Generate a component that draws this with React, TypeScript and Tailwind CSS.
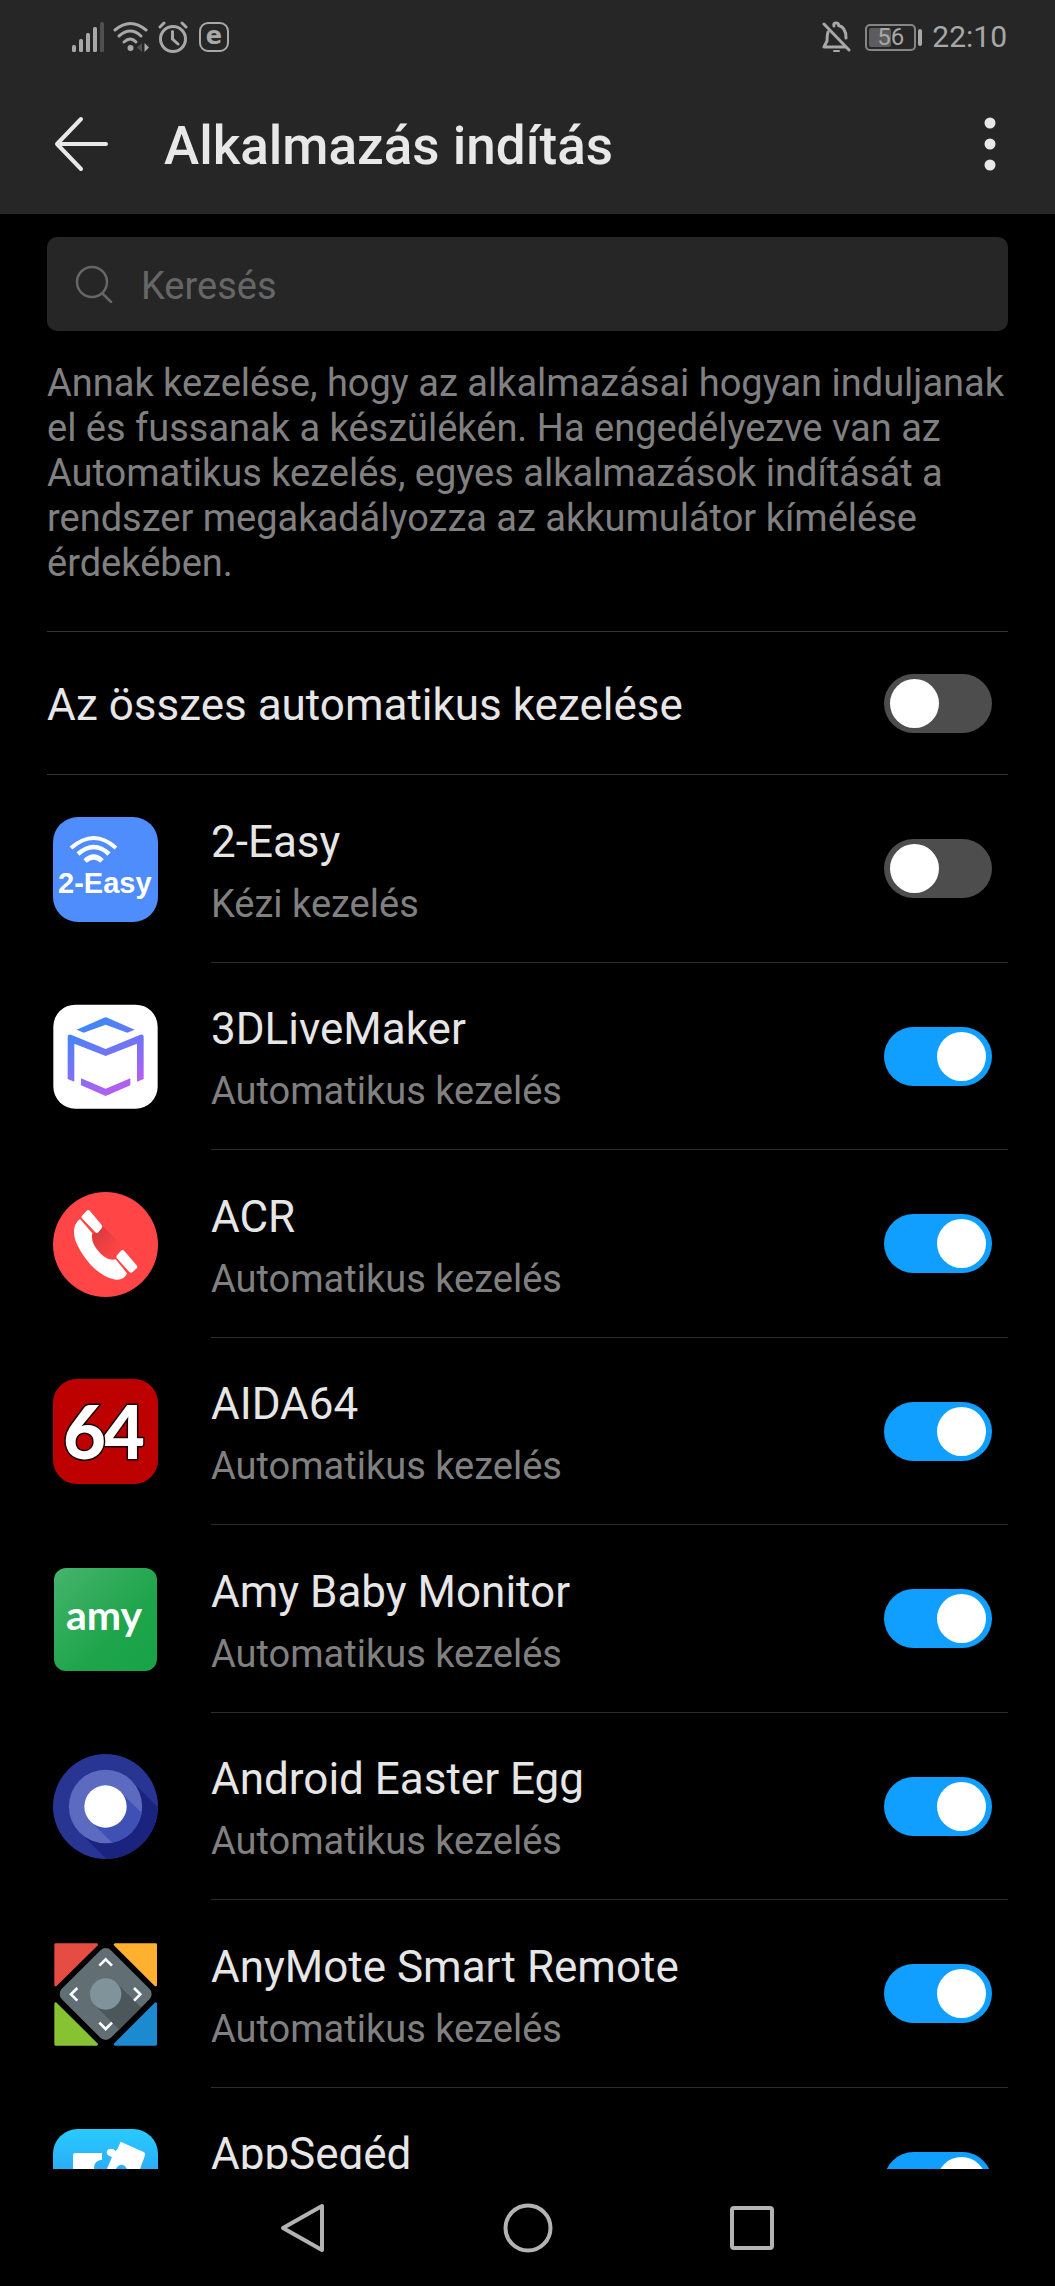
import { useId, useState } from 'react';
import type { ReactNode } from 'react';

type AppEntry = {
  name: string;
  enabled: boolean;
  icon: ReactNode;
};

const TwoEasyIcon = () => (
  <svg viewBox="0 0 105 105" className="size-full" aria-hidden="true">
    <rect width="105" height="105" rx="25" fill="#4f8dfd" />
    <g fill="none" stroke="#fff">
      <path d="M18 31 Q41 11 63 31" strokeWidth="4" />
      <path d="M25 37 Q41 23 56 37" strokeWidth="4.5" />
      <path d="M32 44 Q41 36 49 44" strokeWidth="5" />
    </g>
    <text x="5" y="76" fill="#fff" fontFamily="Liberation Sans, sans-serif" fontWeight="700" fontSize="29">
      2-Easy
    </text>
  </svg>
);

const LiveMakerIcon = () => (
  <svg viewBox="69 70 315 315" className="size-full" aria-hidden="true">
    <defs>
      <linearGradient id="maker" gradientUnits="userSpaceOnUse" x1="170" y1="120" x2="270" y2="340">
        <stop offset="0" stopColor="#3b89f7" />
        <stop offset="0.5" stopColor="#7672f8" />
        <stop offset="1" stopColor="#bb5cf0" />
      </linearGradient>
    </defs>
    <rect x="70" y="72" width="313" height="312" rx="66" fill="#fff" />
    <g fill="url(#maker)">
      <path d="M140 147 L222 111 Q227 109 232 111 L314 147 L292 156 L227 132 L161 156 Z" />
      <path d="M113 295 V168 Q114 160 123 162 L227 205 L331 162 Q341 160 341 168 V295 L321 303 V189 L227 226 L133 189 V303 Z" />
      <path d="M153 293 L227 324 L301 293 V314 L227 346 L153 314 Z" />
    </g>
  </svg>
);

const AcrIcon = () => (
  <svg viewBox="69 63 315 315" className="size-full" aria-hidden="true">
    <defs>
      <linearGradient id="acr-shade" gradientUnits="userSpaceOnUse" x1="195" y1="185" x2="260" y2="240">
        <stop offset="0" stopColor="#d93a3e" />
        <stop offset="1" stopColor="#ff4545" />
      </linearGradient>
    </defs>
    <circle cx="226.5" cy="220.5" r="157.5" fill="#ff4545" />
    <path d="M187 190 L219 166 L275 222 L258 264 C220 262 190 240 187 190 Z" fill="url(#acr-shade)" />
    <g fill="#fff">
      <path d="M150 144 C130 158 127 188 139 215 C164 272 215 324 262 326 C275 326 286 320 291 307 L257 265 C244 270 224 262 208 244 C190 224 182 206 187 187 Z" />
      <path d="M170 119 Q175 114 180 120 L215 162 Q219 167 215 172 L205 184 Q201 189 196 184 L156 142 Q152 138 156 134 Z" />
      <path d="M273 239 Q278 234 283 240 L320 283 Q324 288 320 292 L308 303 Q303 308 298 303 L262 263 Q257 258 261 253 Z" />
    </g>
  </svg>
);

const AidaIcon = () => (
  <svg viewBox="0 0 105 105" className="size-full" aria-hidden="true">
    <rect width="105" height="105" rx="24" fill="#bd0000" />
    <g
      fill="#fff"
      stroke="#1a0000"
      strokeWidth="3"
      paintOrder="stroke"
      fontFamily="Lato, sans-serif"
      fontWeight="900"
      fontSize="74"
    >
      <text x="49" y="80">4</text>
      <text x="10" y="80">6</text>
    </g>
  </svg>
);

const AmyIcon = () => (
  <svg viewBox="0 0 105 105" className="size-full" aria-hidden="true">
    <defs>
      <linearGradient id="amy" x1="0" y1="0" x2="1" y2="1">
        <stop offset="0" stopColor="#46b46c" />
        <stop offset="0.6" stopColor="#1fa54c" />
        <stop offset="1" stopColor="#17a345" />
      </linearGradient>
    </defs>
    <rect x="1" y="1" width="103" height="103" rx="12" fill="url(#amy)" />
    <text x="13" y="63" fill="#fff" fontFamily="Lato, sans-serif" fontWeight="700" fontSize="41">
      amy
    </text>
  </svg>
);

const EasterEggIcon = () => (
  <svg viewBox="69 71 315 315" className="size-full" aria-hidden="true">
    <defs>
      <clipPath id="egg-outer"><circle cx="226.5" cy="228.5" r="157.5" /></clipPath>
      <clipPath id="egg-inner"><circle cx="226.5" cy="228.5" r="110" /></clipPath>
    </defs>
    <circle cx="226.5" cy="228.5" r="157.5" fill="#283593" />
    <path d="M304 151 L404 251 V406 H249 L149 306 Z" fill="#1a237e" clipPath="url(#egg-outer)" />
    <circle cx="226.5" cy="228.5" r="110" fill="#5c6bc0" />
    <path d="M271 184 L400 313 L311 402 L182 273 Z" fill="#3f51b5" clipPath="url(#egg-inner)" />
    <circle cx="226.5" cy="228.5" r="63.5" fill="#fff" />
  </svg>
);

const AnyMoteIcon = () => (
  <svg viewBox="69 65 315 315" className="size-full" aria-hidden="true">
    <defs>
      <clipPath id="pad"><rect x="123" y="117" width="208" height="208" rx="22" transform="rotate(45 227 221)" /></clipPath>
    </defs>
    <g strokeWidth="8" strokeLinejoin="round">
      <path d="M77 73 H200 L77 194 Z" fill="#e54d42" stroke="#e54d42" />
      <path d="M255 73 H377 V194 Z" fill="#ffb02e" stroke="#ffb02e" />
      <path d="M77 250 V372 H200 Z" fill="#86c232" stroke="#86c232" />
      <path d="M377 250 V372 H255 Z" fill="#1b8ad0" stroke="#1b8ad0" />
    </g>
    <rect x="123" y="117" width="208" height="208" rx="22" fill="#616e74" transform="rotate(45 227 221)" />
    <path d="M260 188 L360 288 L294 354 L194 254 Z" fill="#4c575c" clipPath="url(#pad)" />
    <circle cx="227" cy="221" r="47" fill="#80939a" />
    <g fill="none" stroke="#fff" strokeWidth="8">
      <path d="M208 136 L227 117 L246 136" />
      <path d="M208 307 L227 326 L246 307" />
      <path d="M142 203 L123 222 L142 241" />
      <path d="M312 203 L331 222 L312 241" />
    </g>
  </svg>
);

const AppHelperIcon = () => (
  <svg viewBox="69 147 315 315" className="size-full" aria-hidden="true">
    <defs>
      <linearGradient id="helper" x1="0" y1="0" x2="0" y2="1">
        <stop offset="0" stopColor="#28cbff" />
        <stop offset="1" stopColor="#2f7ff0" />
      </linearGradient>
    </defs>
    <rect x="69" y="147" width="315" height="315" rx="74" fill="url(#helper)" />
    <g fill="#fff">
      <path d="M136 219 H216 V239 Q192 242 192 262 Q192 285 216 288 V400 H129 V226 Q129 219 136 219 Z" />
      <path d="M272 185 L341 216 Q347 220 345 226 L322 290 L293 272 Q287 254 273 254 Q259 256 255 278 L231 266 L246 231 Q231 228 230 217 Q232 206 242 206 Q253 206 256 213 L262 208 Z" />
    </g>
  </svg>
);

const initialApps: AppEntry[] = [
  { name: '2-Easy', enabled: false, icon: <TwoEasyIcon /> },
  { name: '3DLiveMaker', enabled: true, icon: <LiveMakerIcon /> },
  { name: 'ACR', enabled: true, icon: <AcrIcon /> },
  { name: 'AIDA64', enabled: true, icon: <AidaIcon /> },
  { name: 'Amy Baby Monitor', enabled: true, icon: <AmyIcon /> },
  { name: 'Android Easter Egg', enabled: true, icon: <EasterEggIcon /> },
  { name: 'AnyMote Smart Remote', enabled: true, icon: <AnyMoteIcon /> },
  { name: 'AppSegéd', enabled: true, icon: <AppHelperIcon /> },
];

const Toggle = ({ id, checked, onChange }: { id: string; checked: boolean; onChange: () => void }) => (
  <input
    id={id}
    type="checkbox"
    role="switch"
    checked={checked}
    onChange={onChange}
    className="h-[59px] w-[108px] shrink-0 cursor-pointer appearance-none rounded-full bg-[#4d4d4d] px-[6px] py-[5px] before:block before:size-[49px] before:rounded-full before:bg-white checked:bg-[#119fff] checked:before:ml-auto"
  />
);

const StatusBar = () => (
  <div className="flex h-[74px] items-center justify-between pr-12 pl-[72px] text-[#a8a8a8]">
    <div className="flex items-center gap-[9px]">
      <svg width="32" height="32" viewBox="0 0 32 32" fill="currentColor" aria-hidden="true">
        <rect x="0" y="24" width="4" height="7" rx="1.5" />
        <rect x="7" y="18" width="4" height="13" rx="1.5" />
        <rect x="14" y="12" width="4" height="19" rx="1.5" />
        <rect x="21" y="6" width="4" height="25" rx="1.5" />
        <rect x="28" y="1" width="4" height="30" rx="1.5" fill="#505050" />
      </svg>
      <svg width="36" height="32" viewBox="0 0 36 32" fill="none" stroke="currentColor" strokeWidth="3" strokeLinecap="round" aria-hidden="true">
        <path d="M2 9 Q17.5 -4 33 9" />
        <path d="M6 15 Q17.5 5 28 15" />
        <path d="M11 21 Q17.5 15 23 21" />
        <circle cx="17.5" cy="27" r="3" fill="currentColor" stroke="none" />
        <path d="M29 22 V31 L24 26.5 Z" fill="#505050" stroke="none" />
        <path d="M31.5 22 V31 L36 26.5 Z" fill="currentColor" stroke="none" />
      </svg>
      <svg width="30" height="32" viewBox="0 0 30 32" fill="none" stroke="currentColor" strokeWidth="3" strokeLinecap="round" aria-hidden="true">
        <circle cx="15" cy="18" r="12.5" />
        <path d="M2 6 L6 2 M24 2 L28 6" />
        <path d="M14.5 10.5 V18 L20 23" />
      </svg>
      <svg width="32" height="32" viewBox="0 0 32 32" aria-hidden="true">
        <rect x="3" y="2" width="28" height="28" rx="8" fill="none" stroke="currentColor" strokeWidth="2" />
        <text x="17" y="23" textAnchor="middle" fill="currentColor" fontFamily="DejaVu Sans, sans-serif" fontWeight="700" fontSize="24">e</text>
      </svg>
    </div>
    <div className="flex items-center">
      <svg width="30" height="32" viewBox="0 0 30 32" fill="none" stroke="currentColor" strokeWidth="3" strokeLinecap="round" strokeLinejoin="round" aria-hidden="true">
        <path d="M2 3 L27 29" />
        <path d="M12 5 Q11 2 14 2 Q17 2 16.5 4.5 Q24 6 24 17" />
        <path d="M6 11 Q5 14 5 20 L2 26 H23" />
        <path d="M12 30 H17" strokeWidth="2" />
      </svg>
      <div className="ml-[13px] flex items-center gap-[2px]">
        <div className="grid h-[27px] w-[51px] rounded-[5px] border-2 border-[#858585] p-[2px]">
          <div className="col-start-1 row-start-1 w-1/2 rounded-[2px] bg-[#5c5c5c]" />
          <span className="col-start-1 row-start-1 place-self-center text-[24px] leading-[19px]">56</span>
        </div>
        <div className="h-[17px] w-[4px] rounded-[2px] bg-[#a8a8a8]" />
      </div>
      <span className="ml-[10px] text-[30px] leading-[36px]">22:10</span>
    </div>
  </div>
);

const AppRow = ({ app, onToggle }: { app: AppEntry; onToggle: () => void }) => {
  const id = useId();

  return (
    <li className="flex shrink-0 items-center gap-[53px] pr-[47px] pl-[53px] odd:h-[188px] even:h-[187px]">
      <div className="size-[105px] shrink-0">{app.icon}</div>
      <div className="flex h-full flex-1 items-center justify-between border-b border-[#2b2b2b] pr-4">
        <label htmlFor={id} className="flex cursor-pointer flex-col gap-[10px] pt-1">
          <span className="text-[44px] leading-[56px] text-[#e6e6e6]">{app.name}</span>
          <span className="text-[38px] leading-[48px] text-[#808080]">
            {app.enabled ? 'Automatikus kezelés' : 'Kézi kezelés'}
          </span>
        </label>
        <Toggle id={id} checked={app.enabled} onChange={onToggle} />
      </div>
    </li>
  );
};

const App = () => {
  const [apps, setApps] = useState(initialApps);
  const [manageAll, setManageAll] = useState(false);

  const toggleApp = (name: string) => {
    setApps(prev => prev.map(a => (a.name === name ? { ...a, enabled: !a.enabled } : a)));
  };

  const toggleAll = () => {
    setApps(prev => prev.map(a => ({ ...a, enabled: !manageAll })));
    setManageAll(!manageAll);
  };

  return (
    <div className="flex h-screen flex-col overflow-hidden bg-black font-['Roboto',sans-serif]">
      <header className="shrink-0 bg-[#262626]">
        <StatusBar />
        <div className="flex h-[140px] items-center pr-[47px] pl-[53px] text-[#e8e8e8]">
          <button type="button" aria-label="Vissza" className="shrink-0">
            <svg width="57" height="57" viewBox="0 0 57 57" fill="none" stroke="currentColor" strokeWidth="4" strokeLinecap="round" strokeLinejoin="round">
              <path d="M28 3 L4 28 L28 53 M4 28 H53" />
            </svg>
          </button>
          <h1 className="ml-[54px] flex-1 pt-1 text-[53px] leading-[64px] font-medium">Alkalmazás indítás</h1>
          <button type="button" aria-label="További lehetőségek" className="shrink-0">
            <svg width="36" height="57" viewBox="0 0 36 57" fill="currentColor">
              <circle cx="18" cy="7" r="5.5" />
              <circle cx="18" cy="28" r="5.5" />
              <circle cx="18" cy="49" r="5.5" />
            </svg>
          </button>
        </div>
      </header>

      <main className="flex min-h-0 flex-1 flex-col overflow-hidden">
        <div className="mx-[47px] mt-[23px] flex h-[94px] shrink-0 items-center gap-7 rounded-[10px] bg-[#262626] pl-7 text-[#666666]">
          <svg width="38" height="38" viewBox="0 0 38 38" fill="none" stroke="currentColor" strokeWidth="2.5" strokeLinecap="round" aria-hidden="true">
            <circle cx="17" cy="17" r="15" />
            <path d="M27 28 L36 37" />
          </svg>
          <input
            type="search"
            aria-label="Keresés"
            placeholder="Keresés"
            className="min-w-0 flex-1 bg-transparent pt-1 text-[38px] leading-[48px] text-[#e6e6e6] outline-none placeholder:text-[#666666]"
          />
        </div>

        <p className="mx-[47px] mt-[30px] shrink-0 text-[38px] leading-[45px] text-[#808080]">
          Annak kezelése, hogy az alkalmazásai hogyan induljanak el és fussanak a készülékén. Ha engedélyezve van az
          Automatikus kezelés, egyes alkalmazások indítását a rendszer megakadályozza az akkumulátor kímélése érdekében.
        </p>

        <div className="mx-[47px] mt-[45px] flex h-[144px] shrink-0 items-center justify-between border-y border-[#333333] pr-4">
          <label htmlFor="manage-all" className="cursor-pointer pt-1 text-[44px] leading-[56px] text-[#e6e6e6]">
            Az összes automatikus kezelése
          </label>
          <Toggle id="manage-all" checked={manageAll} onChange={toggleAll} />
        </div>

        <ul className="flex flex-col">
          {apps.map(app => (
            <AppRow key={app.name} app={app} onToggle={() => toggleApp(app.name)} />
          ))}
        </ul>
      </main>

      <nav className="flex h-[117px] shrink-0 items-center justify-center gap-[174px] text-[#b3b3b3]">
        <button type="button" aria-label="Vissza">
          <svg width="50" height="50" viewBox="0 0 50 50" fill="none" stroke="currentColor" strokeWidth="4" strokeLinejoin="round">
            <path d="M43 3 V47 L4 25 Z" />
          </svg>
        </button>
        <button type="button" aria-label="Kezdőképernyő">
          <svg width="50" height="50" viewBox="0 0 50 50" fill="none" stroke="currentColor" strokeWidth="4">
            <circle cx="25" cy="25" r="22.5" />
          </svg>
        </button>
        <button type="button" aria-label="Legutóbbi alkalmazások">
          <svg width="50" height="50" viewBox="0 0 50 50" fill="none" stroke="currentColor" strokeWidth="4">
            <rect x="5" y="5" width="40" height="40" rx="2" />
          </svg>
        </button>
      </nav>
    </div>
  );
};

export default App;
